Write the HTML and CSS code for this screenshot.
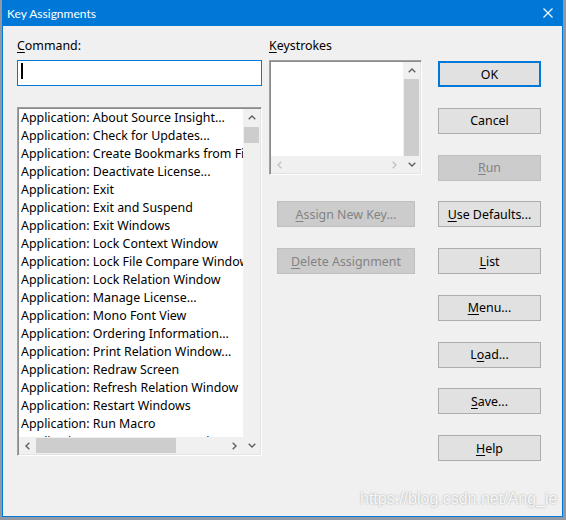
FILE: index.html
```html
<!DOCTYPE html>
<html lang="en">
<head>
    <meta charset="UTF-8">
    <title>Key Assignments</title>
    <link rel="stylesheet" href="styles.css">
</head>
<body>
    <div class="window">
        <div class="titlebar">
            <span>Key Assignments</span>
            <svg class="close" width="10" height="10" viewBox="0 0 10 10"><path d="M0.5 0.5 L9.5 9.5 M9.5 0.5 L0.5 9.5" stroke="#fff" stroke-width="1.1" fill="none"/></svg>
        </div>
        <div class="client">
            <!-- Colonne de gauche : commande + liste -->
            <div class="colLeft">
                <label class="label"><u>C</u>ommand:</label>
                <div class="input"><span class="caret"></span></div>
                <div class="listbox">
                    <div class="rows">
                        <div class="row">Application: About Source Insight...</div>
                        <div class="row">Application: Check for Updates...</div>
                        <div class="row">Application: Create Bookmarks from File Links</div>
                        <div class="row">Application: Deactivate License...</div>
                        <div class="row">Application: Exit</div>
                        <div class="row">Application: Exit and Suspend</div>
                        <div class="row">Application: Exit Windows</div>
                        <div class="row">Application: Lock Context Window</div>
                        <div class="row">Application: Lock File Compare Window</div>
                        <div class="row">Application: Lock Relation Window</div>
                        <div class="row">Application: Manage License...</div>
                        <div class="row">Application: Mono Font View</div>
                        <div class="row">Application: Ordering Information...</div>
                        <div class="row">Application: Print Relation Window...</div>
                        <div class="row">Application: Redraw Screen</div>
                        <div class="row">Application: Refresh Relation Window</div>
                        <div class="row">Application: Restart Windows</div>
                        <div class="row">Application: Run Macro</div>
                        <div class="row">Application: Setup Common Projects</div>
                    </div>
                    <div class="vscroll">
                        <div class="arrow"><svg width="8" height="5" viewBox="0 0 8 5"><path d="M0.7 4.3 L4 1 L7.3 4.3" fill="none" stroke="#606060" stroke-width="1.4"/></svg></div>
                        <div class="thumb"></div>
                        <div class="spacer"></div>
                        <div class="arrow"><svg width="8" height="5" viewBox="0 0 8 5"><path d="M0.7 0.7 L4 4 L7.3 0.7" fill="none" stroke="#606060" stroke-width="1.4"/></svg></div>
                    </div>
                    <div class="hscroll">
                        <div class="arrow"><svg width="5" height="8" viewBox="0 0 5 8"><path d="M4.3 0.7 L1 4 L4.3 7.3" fill="none" stroke="#606060" stroke-width="1.4"/></svg></div>
                        <div class="hthumb"></div>
                        <div class="spacer"></div>
                        <div class="arrow"><svg width="5" height="8" viewBox="0 0 5 8"><path d="M0.7 0.7 L4 4 L0.7 7.3" fill="none" stroke="#606060" stroke-width="1.4"/></svg></div>
                    </div>
                </div>
            </div>

            <!-- Colonne du milieu : touches -->
            <div class="colMid">
                <label class="label"><u>K</u>eystrokes</label>
                <div class="keybox">
                    <div class="keyArea"></div>
                    <div class="vscroll">
                        <div class="arrow"><svg width="8" height="5" viewBox="0 0 8 5"><path d="M0.7 4.3 L4 1 L7.3 4.3" fill="none" stroke="#606060" stroke-width="1.4"/></svg></div>
                        <div class="track"></div>
                        <div class="arrow"><svg width="8" height="5" viewBox="0 0 8 5"><path d="M0.7 0.7 L4 4 L7.3 0.7" fill="none" stroke="#606060" stroke-width="1.4"/></svg></div>
                    </div>
                    <div class="hscroll">
                        <div class="arrow"><svg width="5" height="8" viewBox="0 0 5 8"><path d="M4.3 0.7 L1 4 L4.3 7.3" fill="none" stroke="#c2c2c2" stroke-width="1.4"/></svg></div>
                        <div class="spacer"></div>
                        <div class="arrow"><svg width="5" height="8" viewBox="0 0 5 8"><path d="M0.7 0.7 L4 4 L0.7 7.3" fill="none" stroke="#c2c2c2" stroke-width="1.4"/></svg></div>
                    </div>
                </div>
                <button class="btn midBtn assign" disabled><u>A</u>ssign New Key...</button>
                <button class="btn midBtn delete" disabled><u>D</u>elete Assignment</button>
            </div>

            <!-- Colonne de droite : boutons -->
            <div class="colRight">
                <button class="btn default">OK</button>
                <button class="btn">Cancel</button>
                <button class="btn" disabled><u>R</u>un</button>
                <button class="btn"><u>U</u>se Defaults...</button>
                <button class="btn"><u>L</u>ist</button>
                <button class="btn"><u>M</u>enu...</button>
                <button class="btn">L<u>o</u>ad...</button>
                <button class="btn"><u>S</u>ave...</button>
                <button class="btn"><u>H</u>elp</button>
            </div>
        </div>
    </div>
    <div class="watermark">https://blog.csdn.net/Ang_ie</div>
</body>
</html>
```

FILE: styles.css
```css
body {
    margin: 0;
    position: relative;
    height: 520px;
    overflow: hidden;
    background: #8f98a3;
    font-family: "Noto Sans", sans-serif;
    font-size: 12.4px;
    color: #000;
}
.window {
    width: 559px;
    height: 516px;
    margin-left: 2px;
    border: 1px solid #0078d7;
    border-top: 0;
    background: #f0f0f0;
}
.titlebar {
    height: 26px;
    display: flex;
    align-items: center;
    justify-content: space-between;
    padding-left: 4px;
    background: #0078d7;
    color: #fff;
    font-family: Lato, sans-serif;
    font-size: 12px;
}
.close {
    margin-right: 9px;
}
.client {
    display: flex;
    padding: 10px 0 0 14px;
}
.colLeft {
    width: 245px;
    margin-right: 7px;
}
.colMid {
    width: 153px;
    margin-right: 16px;
}
.colRight {
    width: 103px;
    padding-top: 25px;
    display: flex;
    flex-direction: column;
    gap: 20.75px;
}
.label {
    display: block;
    height: 18px;
    line-height: 18px;
    margin-top: 1px;
}
u {
    text-decoration-thickness: 1px;
    text-underline-offset: 2px;
}
.input {
    margin-top: 5px;
    height: 26px;
    box-sizing: border-box;
    border: 1px solid #0078d7;
    background: #fff;
    display: flex;
    padding-left: 3px;
}
.caret {
    width: 2px;
    height: 16px;
    margin-top: 2px;
    background: #000;
}
/* bordure enfoncée façon Windows */
.listbox, .keybox {
    box-sizing: border-box;
    border: 1px solid;
    border-color: #a0a0a0 #ffffff #ffffff #a0a0a0;
    box-shadow: inset 1px 1px #8a8a8a, inset -1px -1px #e3e3e3;
    padding: 1px;
    background: #fff;
    display: grid;
    grid-template-columns: 1fr 17px;
    grid-template-rows: 1fr 17px;
}
.listbox {
    margin-top: 21px;
    height: 349px;
}
.rows {
    grid-column: 1;
    grid-row: 1;
    overflow: hidden;
}
.row {
    height: 18px;
    line-height: 18px;
    padding-left: 2px;
    white-space: nowrap;
}
.vscroll {
    grid-column: 2;
    grid-row: 1 / 3;
    background: #f0f0f0;
    display: flex;
    flex-direction: column;
}
.hscroll {
    grid-column: 1;
    grid-row: 2;
    background: #f0f0f0;
    display: flex;
}
.arrow {
    width: 17px;
    height: 17px;
    flex: none;
    display: flex;
    align-items: center;
    justify-content: center;
}
.spacer {
    flex: 1;
}
.thumb {
    height: 16px;
    margin: 1px 1px 0;
    background: #cdcdcd;
}
.hthumb {
    width: 140px;
    margin: 1px 0;
    background: #cdcdcd;
}
.track {
    flex: 1;
    margin: 0 1px;
    background: #cdcdcd;
}
.keybox {
    margin-top: 5px;
    height: 115px;
}
.keyArea {
    grid-column: 1;
    grid-row: 1;
}
.btn {
    display: block;
    height: 26px;
    box-sizing: border-box;
    padding: 0;
    border: 1px solid #adadad;
    background: #e1e1e1;
    color: #000;
    font: inherit;
    text-align: center;
}
.btn.default {
    border: 2px solid #0078d7;
}
.btn:disabled {
    background: #cccccc;
    border-color: #bfbfbf;
    color: #838383;
}
.midBtn {
    width: 138px;
    margin-left: 8px;
}
.assign {
    margin-top: 26px;
}
.delete {
    margin-top: 21px;
}
.watermark {
    position: absolute;
    left: 360px;
    top: 490px;
    line-height: 18px;
    font-family: "Liberation Sans", Arial, sans-serif;
    font-size: 16px;
    color: rgba(255, 255, 255, 0.9);
    text-shadow: 0 0 2px rgba(0, 0, 0, 0.35);
}
```
